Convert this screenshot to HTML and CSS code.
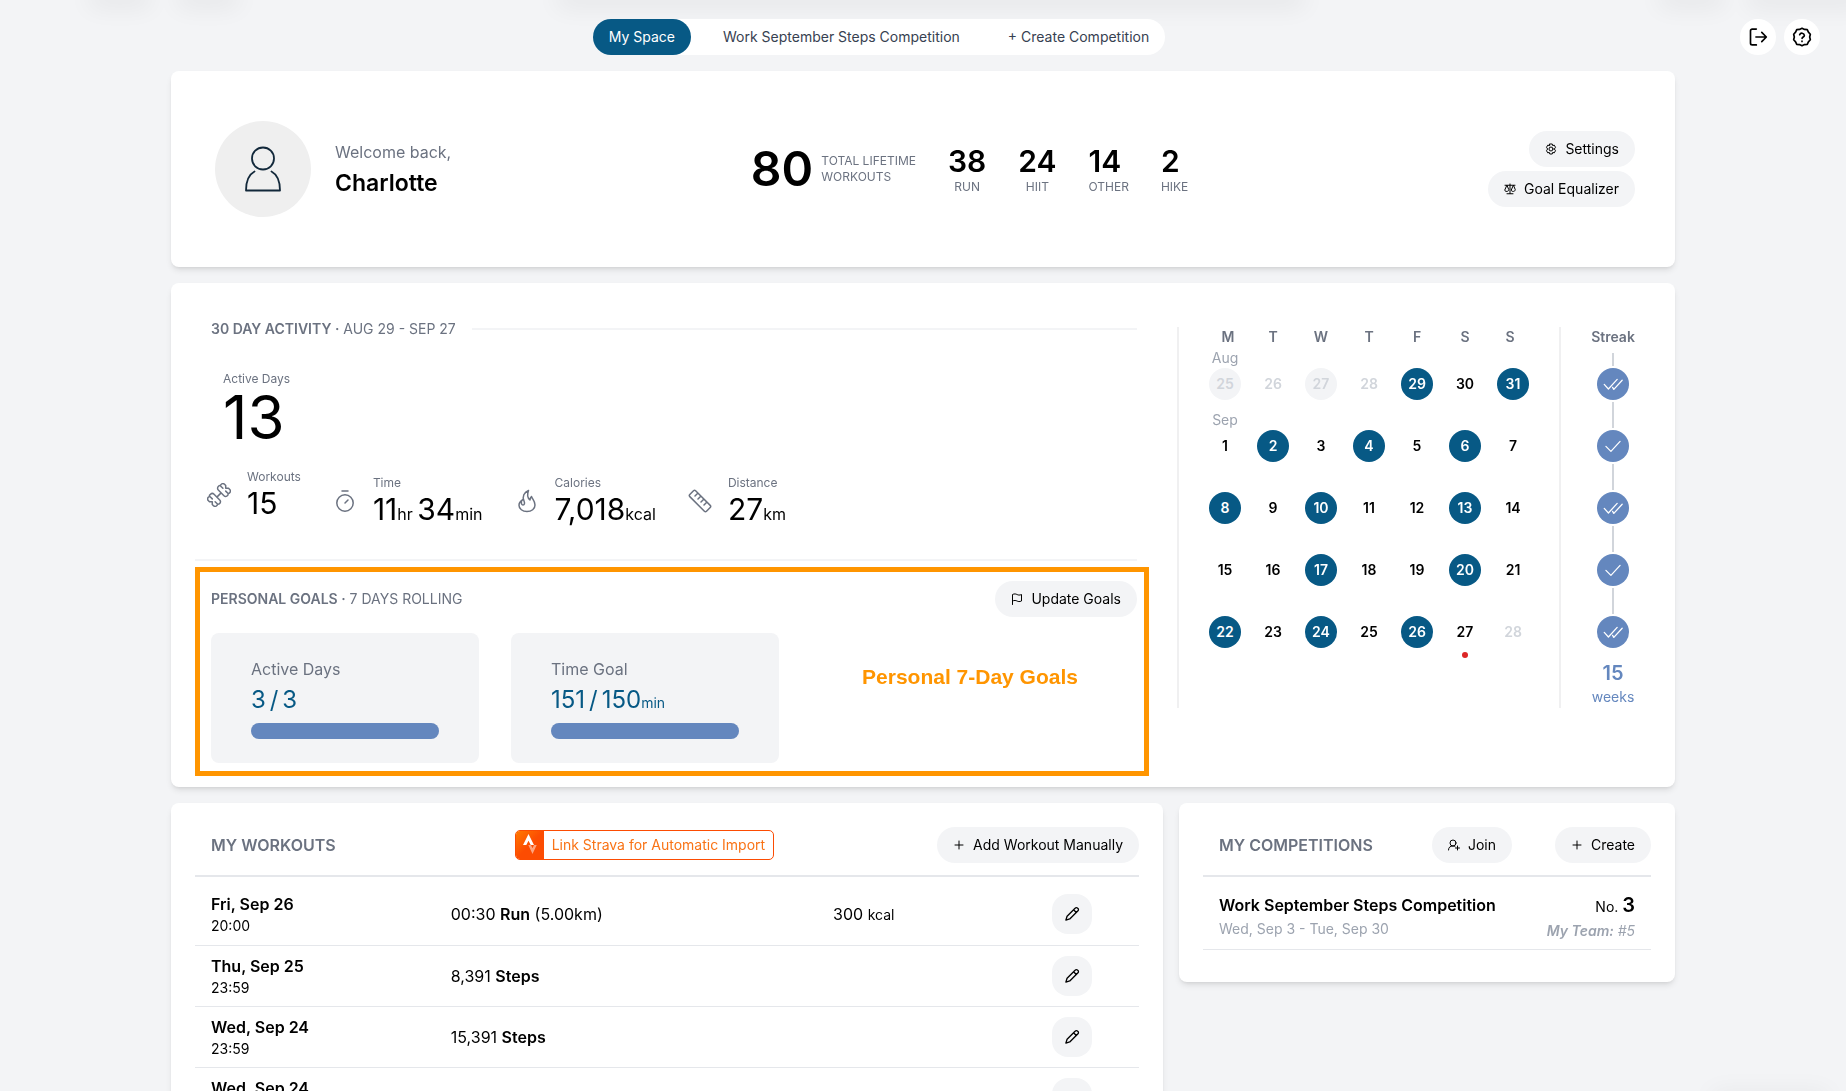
FILE: index.html
```html
<!DOCTYPE html>
<html lang="en">
<head>
<meta charset="utf-8">
<meta name="viewport" content="width=device-width, initial-scale=1">
<title>My Space</title>
<link rel="stylesheet" href="styles.css">
</head>
<body>
<svg class="sprite" aria-hidden="true">
  <symbol id="plus" viewBox="0 0 24 24"><path d="M4 12h16M12 4v16"/></symbol>
  <symbol id="pencil" viewBox="0 0 24 24"><path d="M14.4 5.7 17 3.1a2.2 2.2 0 0 1 3.2 0l.8.8a2.2 2.2 0 0 1 0 3.2L8.6 19.4 2.8 21.2l1.8-5.8L14.4 5.7zM14.4 5.7l4 4"/></symbol>
  <symbol id="check" viewBox="0 0 24 24"><path d="M3.500 12.500l6 6L20.500 6.500"/></symbol>
  <symbol id="checks" viewBox="0 0 24 24"><path d="M1.500 12.500l5 5.500L17 6.500M12.500 18l.5.500L23 7.500M11.500 16l1.500 2.500"/></symbol>
</svg>
<div class="glow glow-left"></div>
<div class="glow glow-left2"></div>
<div class="glow glow-center"></div>
<div class="glow glow-right2"></div>
<div class="glow glow-right"></div>
<div class="glow glow-corner"></div>

<header class="topbar">
  <nav class="tabs" aria-label="Main">
    <a class="tab tab-active" href="#">My Space</a>
    <a class="tab" href="#">Work September Steps Competition</a>
    <a class="tab" href="#">+ Create Competition</a>
  </nav>
  <div class="tools">
    <button class="round" aria-label="Log out"><svg class="icon tool-icon" viewBox="0 0 24 24"><path d="M10 2.500H5a2 2 0 0 0-2 2v15a2 2 0 0 0 2 2h5M9.500 12h12M16.500 6.500 22 12l-5.500 5.500"/></svg></button>
    <button class="round" aria-label="Help"><svg class="icon tool-icon" viewBox="0 0 24 24"><path d="M12 1.500l3 1.400 3.300.300 1.400 3 2.300 2.500-.8 3.300.8 3.300-2.300 2.500-1.400 3-3.300.300-3 1.400-3-1.400-3.300-.300-1.400-3L2 15.300l.8-3.300L2 8.700l2.300-2.500 1.400-3L9 2.900z"/><path d="M9.200 9.300a2.900 2.900 0 0 1 5.600.8c0 1.800-2.700 2-2.700 3.700M12 17v.300"/></svg></button>
  </div>
</header>

<main class="page">
  <section class="card profile">
    <div class="who">
      <svg class="avatar" viewBox="0 0 96 96" aria-hidden="true"><circle cx="48" cy="48" r="48" fill="#efefef"/><g fill="none" stroke="#12283a" stroke-width="1.800" stroke-linejoin="round" stroke-linecap="round"><circle cx="48" cy="37.500" r="11"/><path d="M39.500 50.500C33 54 31 60 31 69.500h34C65 60 63 54 56.500 50.500"/></g></svg>
      <div class="greeting">
        <p class="welcome">Welcome back,</p>
        <h1 class="name">Charlotte</h1>
      </div>
    </div>
    <div class="lifetime">
      <div class="total"><strong class="total-num">80</strong><span class="caps">Total Lifetime<br>Workouts</span></div>
      <div class="kind"><strong class="kind-num">38</strong><span class="caps">Run</span></div>
      <div class="kind"><strong class="kind-num">24</strong><span class="caps">HIIT</span></div>
      <div class="kind"><strong class="kind-num">14</strong><span class="caps">Other</span></div>
      <div class="kind"><strong class="kind-num">2</strong><span class="caps">Hike</span></div>
    </div>
    <div class="actions">
      <button class="pill"><svg class="icon pill-icon" viewBox="0 0 24 24"><path d="M9.500 2h5l.8 3.200 3.200-.9 2.500 4.300L18.700 12l2.300 3.400-2.500 4.300-3.200-.9-.8 3.200h-5l-.8-3.200-3.200.9L3 15.400 5.300 12 3 8.600l2.500-4.300 3.200.9z"/><circle cx="12" cy="12" r="4"/></svg>Settings</button>
      <button class="pill"><svg class="icon pill-icon" viewBox="0 0 24 24"><path d="M12 2v19M6 21.500h12M2 4.500h20M5.500 5l-4 9c0 4 8 4 8 0zM18.500 5l-4 9c0 4 8 4 8 0z"/></svg>Goal Equalizer</button>
    </div>
  </section>

  <section class="card activity">
    <div class="summary">
      <div class="section-head">
        <h2 class="section-title"><b>30 DAY ACTIVITY ·</b> AUG 29 - SEP 27</h2>
        <span class="rule"></span>
      </div>
      <div class="active-days"><span class="label">Active Days</span><span class="huge">13</span></div>
      <div class="metrics">
        <div class="metric metric-raised">
          <svg class="icon metric-icon" viewBox="0 0 24 24"><g transform="rotate(-45 12 12)"><path d="M9 12h6M5 5.500h1.500A2.500 2.500 0 0 1 9 8v8a2.500 2.500 0 0 1-4.500 1.500A2.500 2.500 0 0 1 0.500 16v-2L2.500 12 .500 10V8a2.500 2.500 0 0 1 4-1.500M4.500 7v3M4.500 14v3M19 5.500h-1.500A2.500 2.500 0 0 0 15 8v8a2.500 2.500 0 0 0 4.500 1.500 2.500 2.500 0 0 0 4-1.500v-2l-2-2 2-2V8a2.500 2.500 0 0 0-4-1.500M19.500 7v3M19.500 14v3"/></g></svg>
          <div><span class="label">Workouts</span><span class="value">15</span></div>
        </div>
        <div class="metric">
          <svg class="icon metric-icon" viewBox="0 0 24 24"><path d="M9 2h6M12 14l3-3"/><circle cx="12" cy="14" r="8.200"/></svg>
          <div><span class="label">Time</span><span class="value">11<small>hr </small>34<small>min</small></span></div>
        </div>
        <div class="metric">
          <svg class="icon metric-icon" viewBox="0 0 24 24"><path d="M8 10.500c-2.500 1.500-4 3.300-4 5.700C4 20 7.500 22.500 12 22.500s8-2.500 8-6.500c0-4-2.500-5.500-3.500-8.500-1 1-1.500 2-1.500 3.500-2.500-2-3-5.500-1.500-9.500C9 3.500 7 7.500 9 12c1 2.200.5 4-1 4-1.300 0-2-1.500-1.500-3.500"/></svg>
          <div><span class="label">Calories</span><span class="value">7,018<small>kcal</small></span></div>
        </div>
        <div class="metric">
          <svg class="icon metric-icon" viewBox="0 0 24 24"><path d="M1.800 5.500 5.500 1.800a1.500 1.500 0 0 1 2.100 0L22.200 16.400a1.500 1.500 0 0 1 0 2.100l-3.700 3.700a1.500 1.500 0 0 1-2.100 0L1.800 7.600a1.500 1.500 0 0 1 0-2.100zM9.500 4.500 7 7M12.500 7.500 10 10M15.500 10.500 13 13M18.500 13.500 16 16"/></svg>
          <div><span class="label">Distance</span><span class="value">27<small>km</small></span></div>
        </div>
      </div>
      <div class="goals">
        <div class="section-head spread">
          <h2 class="section-title"><b>PERSONAL GOALS ·</b> 7 DAYS ROLLING</h2>
          <button class="pill"><svg class="icon pill-icon" viewBox="0 0 24 24"><path d="M3 23V3c4-2 7-1 9 0s5 2 9 0v13c-4 2-7 1-9 0s-5-2-9 0"/></svg>Update Goals</button>
        </div>
        <div class="goal-grid">
          <div class="goal"><span class="goal-label">Active Days</span><span class="goal-value">3<small> </small>/<small> </small>3</span><div class="bar"><div class="bar-fill" style="width:100%"></div></div></div>
          <div class="goal"><span class="goal-label">Time Goal</span><span class="goal-value">151<small> </small>/<small> </small>150<small>min</small></span><div class="bar"><div class="bar-fill" style="width:100%"></div></div></div>
          <p class="callout-text">Personal 7-Day Goals</p>
        </div>
        <div class="callout"></div>
      </div>
    </div>

    <table class="calendar">
      <thead><tr><th>M</th><th>T</th><th>W</th><th>T</th><th>F</th><th>S</th><th>S</th></tr></thead>
      <tbody>
        <tr><td><i>Aug</i><span class="day off fill">25</span></td><td><span class="day off">26</span></td><td><span class="day off fill">27</span></td><td><span class="day off">28</span></td><td><span class="day on">29</span></td><td><span class="day">30</span></td><td><span class="day on">31</span></td></tr>
        <tr><td><i>Sep</i><span class="day">1</span></td><td><span class="day on">2</span></td><td><span class="day">3</span></td><td><span class="day on">4</span></td><td><span class="day">5</span></td><td><span class="day on">6</span></td><td><span class="day">7</span></td></tr>
        <tr><td><span class="day on">8</span></td><td><span class="day">9</span></td><td><span class="day on">10</span></td><td><span class="day">11</span></td><td><span class="day">12</span></td><td><span class="day on">13</span></td><td><span class="day">14</span></td></tr>
        <tr><td><span class="day">15</span></td><td><span class="day">16</span></td><td><span class="day on">17</span></td><td><span class="day">18</span></td><td><span class="day">19</span></td><td><span class="day on">20</span></td><td><span class="day">21</span></td></tr>
        <tr><td><span class="day on">22</span></td><td><span class="day">23</span></td><td><span class="day on">24</span></td><td><span class="day">25</span></td><td><span class="day on">26</span></td><td><span class="day today">27</span></td><td><span class="day off">28</span></td></tr>
      </tbody>
    </table>

    <div class="streak">
      <h3 class="streak-title">Streak</h3>
      <ol class="weeks">
        <li><span class="badge"><svg class="icon badge-icon"><use href="#checks"/></svg></span></li>
        <li><span class="badge"><svg class="icon badge-icon"><use href="#check"/></svg></span></li>
        <li><span class="badge"><svg class="icon badge-icon"><use href="#checks"/></svg></span></li>
        <li><span class="badge"><svg class="icon badge-icon"><use href="#check"/></svg></span></li>
        <li><span class="badge"><svg class="icon badge-icon"><use href="#checks"/></svg></span></li>
      </ol>
      <strong class="streak-num">15</strong>
      <span class="streak-unit">weeks</span>
    </div>
  </section>

  <div class="columns">
    <section class="card list">
      <div class="list-head">
        <h2 class="list-title">MY WORKOUTS</h2>
        <button class="strava"><span class="strava-logo"><svg viewBox="0 0 24 24" width="24" height="24" aria-hidden="true"><path d="M10.500 1 16 12h-3.300L10.500 7.800 8.300 12H5z" fill="#fff"/><path d="M16 12h2.700L14.500 21 10.300 12H13l1.500 3.200z" fill="#fda580"/></svg></span><span class="strava-text">Link Strava for Automatic Import</span></button>
        <button class="pill"><svg class="icon pill-icon"><use href="#plus"/></svg>Add Workout Manually</button>
      </div>
      <table class="workouts">
        <colgroup><col class="c-date"><col class="c-what"><col class="c-kcal"><col class="c-edit"></colgroup>
        <tbody>
          <tr><td><b>Fri, Sep 26</b><span class="time">20:00</span></td><td>00:30 <b>Run</b> (5.00km)</td><td>300 <small>kcal</small></td><td><button class="edit" aria-label="Edit"><svg class="icon edit-icon"><use href="#pencil"/></svg></button></td></tr>
          <tr><td><b>Thu, Sep 25</b><span class="time">23:59</span></td><td>8,391 <b>Steps</b></td><td></td><td><button class="edit" aria-label="Edit"><svg class="icon edit-icon"><use href="#pencil"/></svg></button></td></tr>
          <tr><td><b>Wed, Sep 24</b><span class="time">23:59</span></td><td>15,391 <b>Steps</b></td><td></td><td><button class="edit" aria-label="Edit"><svg class="icon edit-icon"><use href="#pencil"/></svg></button></td></tr>
          <tr><td><b>Wed, Sep 24</b></td><td></td><td></td><td><button class="edit" aria-label="Edit"><svg class="icon edit-icon"><use href="#pencil"/></svg></button></td></tr>
        </tbody>
      </table>
    </section>

    <section class="card list">
      <div class="list-head">
        <h2 class="list-title">MY COMPETITIONS</h2>
        <button class="pill"><svg class="icon pill-icon" viewBox="0 0 24 24"><circle cx="10" cy="8" r="6"/><path d="M1 22c0-5 3-8 9-8 2 0 3 .300 4 1M19 14v8M15 18h8"/></svg>Join</button>
        <button class="pill"><svg class="icon pill-icon"><use href="#plus"/></svg>Create</button>
      </div>
      <a class="competition" href="#">
        <span class="comp-main"><b>Work September Steps Competition</b><span class="dates">Wed, Sep 3 - Tue, Sep 30</span></span>
        <span class="comp-rank"><span class="rank">No. <b>3</b></span><em class="team"><b>My Team:</b> #5</em></span>
      </a>
    </section>
  </div>
</main>
</body>
</html>
```
FILE: styles.css
```css
* { box-sizing: border-box; }
body { margin: 0; height: 100vh; overflow: hidden; background: #f3f4f6; color: #000; font: 400 16px/24px Inter, "Liberation Sans", sans-serif; }
h1, h2, h3, p, ol { margin: 0; padding: 0; }
b, strong { font-weight: 600; }
small { line-height: 1; }
button { margin: 0; border: 0; padding: 0; font: inherit; color: inherit; cursor: pointer; }
a { color: inherit; text-decoration: none; }
.sprite { display: none; }
.icon { display: block; flex: none; fill: none; stroke: currentColor; stroke-width: 2; stroke-linecap: round; stroke-linejoin: round; }

/* soft shadows cast by panels parked beyond the window edges */
.glow { position: fixed; z-index: -1; height: 20px; top: -24px; border-radius: 8px; box-shadow: 0 12px 24px rgba(0, 0, 0, .06); }
.glow-left { left: 88px; width: 64px; }
.glow-left2 { left: 176px; width: 64px; }
.glow-center { left: 556px; right: 540px; }
.glow-right2 { right: 120px; width: 68px; }
.glow-right { right: -20px; width: 120px; }
.glow-corner { top: auto; bottom: -20px; right: 16px; width: 120px; box-shadow: 0 0 24px rgba(0, 0, 0, .05); }

.topbar { display: flex; align-items: center; padding: 19px 26px 16px 18px; }
.tabs { display: flex; gap: 16px; margin: 0 auto; border-radius: 18px; background: #fff; }
.tab { padding: 8px 16px; border-radius: 18px; font-size: 14px; line-height: 20px; color: #374151; }
.tab-active { background: #075985; color: #fff; }
.tools { display: flex; gap: 8px; }
.round { display: grid; place-items: center; width: 36px; height: 36px; border-radius: 50%; background: #fff; }
.tool-icon { width: 20px; height: 20px; }

.page { display: flex; flex-direction: column; gap: 16px; max-width: 1536px; margin: 0 auto; padding: 0 16px; }
.card { border-radius: 8px; background: #fff; box-shadow: 0 4px 6px -1px rgba(0, 0, 0, .1), 0 2px 4px -2px rgba(0, 0, 0, .1); }
.pill { display: flex; align-items: center; gap: 8px; padding: 8px 16px; border-radius: 18px; background: #f3f4f6; font-size: 14px; line-height: 20px; white-space: nowrap; }
.pill-icon { width: 12px; height: 12px; }

.profile { display: flex; align-items: center; justify-content: space-between; padding: 50px 40px 50px 44px; }
.who { display: flex; align-items: center; gap: 24px; }
.avatar { width: 96px; height: 96px; }
.greeting { padding-top: 4px; }
.welcome { color: #6b7280; }
.name { font-size: 23px; line-height: 38px; font-weight: 600; }
.lifetime { display: flex; align-items: center; gap: 32px; }
.total { display: flex; align-items: center; gap: 8px; }
.total-num { font-size: 48px; line-height: 52px; }
.caps { font-size: 12px; line-height: 16px; color: #6b7280; text-transform: uppercase; }
.kind { display: flex; flex-direction: column; }
.kind-num { font-size: 30px; line-height: 36px; }
.kind .caps { text-align: center; }
.actions { display: flex; flex-direction: column; align-items: flex-end; gap: 4px; }

.activity { display: grid; grid-template-columns: 1fr 382px 92px; padding: 24px; }
.summary { margin-right: 40px; padding-top: 4px; }
.section-head { display: flex; align-items: center; gap: 16px; height: 36px; padding-left: 16px; }
.spread { justify-content: space-between; }
.section-title { font-size: 14px; line-height: 20px; font-weight: 400; color: #6b7280; }
.rule { flex: 1; height: 2px; background: #f3f4f6; }
.label { display: block; font-size: 12px; line-height: 16px; color: #6b7280; }
.active-days { padding: 24px 28px 0; }
.huge { display: block; font-size: 60px; line-height: 60px; }
.metrics { display: flex; align-items: flex-end; gap: 32px; padding: 22px 12px 32px; border-bottom: 2px solid #f3f4f6; }
.metric { display: flex; align-items: center; gap: 16px; color: #6b7280; }
.metric-raised { padding-bottom: 6px; }
.metric-icon { width: 24px; height: 24px; stroke-width: 1.5; }
.value { display: block; font-size: 30px; line-height: 36px; color: #000; }
.value small { font-size: 16px; }
.goals { position: relative; padding-top: 20px; }
.goal-grid { display: grid; grid-template-columns: minmax(0, 268px) minmax(0, 268px) 1fr; gap: 32px; padding: 16px 8px 0 16px; }
.goal { display: flex; flex-direction: column; padding: 24px 40px; border-radius: 8px; background: #f3f4f6; }
.goal-label { color: #6b7280; }
.goal-value { font-size: 24px; line-height: 38px; color: #075985; }
.goal-value small { font-size: 14px; }
.bar { height: 16px; margin-top: 4px; border-radius: 8px; background: #e5e7eb; }
.bar-fill { height: 16px; border-radius: 8px; background: #6487be; }
.callout { position: absolute; inset: 6px -12px -13px 0; border: 5px solid #ff9500; pointer-events: none; }
.callout-text { padding-top: 32px; text-align: center; font: 700 21px/24px "Liberation Sans", sans-serif; color: #ff9500; }

.calendar { display: block; margin: 20px 0 55px; padding: 0 30px; border-left: 2px solid #f0f0f1; font-size: 14px; line-height: 20px; }
.calendar thead, .calendar tbody { display: block; }
.calendar tr { display: grid; grid-template-columns: repeat(7, 32px); gap: 16px; height: 62px; }
.calendar thead tr { height: 21px; }
.calendar th { padding: 0; font-weight: 600; color: #6b7280; }
.calendar th:first-child { padding-left: 6px; }
.calendar th:last-child { padding-right: 6px; }
.calendar td { display: flex; flex-direction: column; justify-content: flex-end; padding: 0 0 10px; text-align: center; }
.calendar i { font-style: normal; color: #9ca3af; }
.day { position: relative; width: 32px; border-radius: 50%; line-height: 32px; font-weight: 600; }
.off { color: #d1d5db; }
.fill { background: #f3f4f6; }
.on { background: #075985; color: #fff; }
.today::after { content: ""; position: absolute; left: 13px; bottom: -10px; width: 6px; height: 6px; border-radius: 50%; background: #dc2626; }

.streak { display: flex; flex-direction: column; align-items: center; margin: 20px 0 55px; padding-left: 14px; border-left: 2px solid #f0f0f1; color: #6487be; }
.streak-title { font-size: 14px; line-height: 20px; font-weight: 600; color: #6b7280; }
.weeks { margin: 6px 0 -4px; list-style: none; }
.weeks li { display: flex; flex-direction: column; align-items: center; gap: 2px; }
.weeks li::before, .weeks li::after { content: ""; width: 2px; height: 13px; background: #d1d5db; }
.weeks li:last-child::after { visibility: hidden; }
.badge { display: grid; place-items: center; width: 32px; height: 32px; border-radius: 50%; background: #6487be; color: #fff; }
.badge-icon { width: 20px; height: 20px; stroke-width: 1.5; }
.streak-num { font-size: 20px; line-height: 28px; }
.streak-unit { font-size: 14px; line-height: 20px; }

.columns { display: grid; grid-template-columns: 2fr 1fr; align-items: start; gap: 16px; }
.list { padding: 24px 24px 32px; }
.list-head { display: flex; align-items: center; justify-content: space-between; padding-bottom: 12px; border-bottom: 2px solid #e5e7eb; }
.list-title { padding: 0 16px; font-size: 16px; line-height: 24px; font-weight: 600; color: #6b7280; }
.strava { display: flex; height: 30px; overflow: hidden; border: 1px solid #fc4c02; border-radius: 5px; background: #fff; color: #f97316; font-size: 14px; line-height: 28px; white-space: nowrap; }
.strava-logo { display: grid; place-items: center; width: 28px; height: 28px; background: linear-gradient(135deg, #ff7a00, #fc4c02 50%); }
.strava-text { padding: 0 8px; }
.workouts { width: 100%; margin-top: 7px; border-collapse: collapse; table-layout: fixed; }
.workouts td { height: 61px; padding: 0 0 0 16px; border-bottom: 1px solid #e5e7eb; }
.workouts td b { font-weight: 600; }
.workouts small { font-size: 14px; }
.workouts tr:last-child td:first-child { padding-bottom: 20px; }
.c-date { width: 25.4%; }
.c-what { width: 40.5%; }
.c-kcal { width: 23.2%; }
.time { display: block; font-size: 14px; line-height: 20px; }
.edit { display: grid; place-items: center; width: 40px; height: 40px; border-radius: 16px; background: #f3f4f6; }
.edit-icon { width: 16px; height: 16px; }
.competition { display: flex; justify-content: space-between; padding: 16px 16px 8px; border-bottom: 1px solid #e5e7eb; }
.comp-main, .comp-rank { display: flex; flex-direction: column; }
.comp-rank { align-items: flex-end; }
.dates { font-size: 14px; line-height: 24px; color: #9ca3af; }
.team { font-size: 14px; line-height: 20px; color: #9ca3af; }
.rank { font-size: 14px; line-height: 28px; }
.rank b { font-size: 20px; line-height: 20px; }
```
